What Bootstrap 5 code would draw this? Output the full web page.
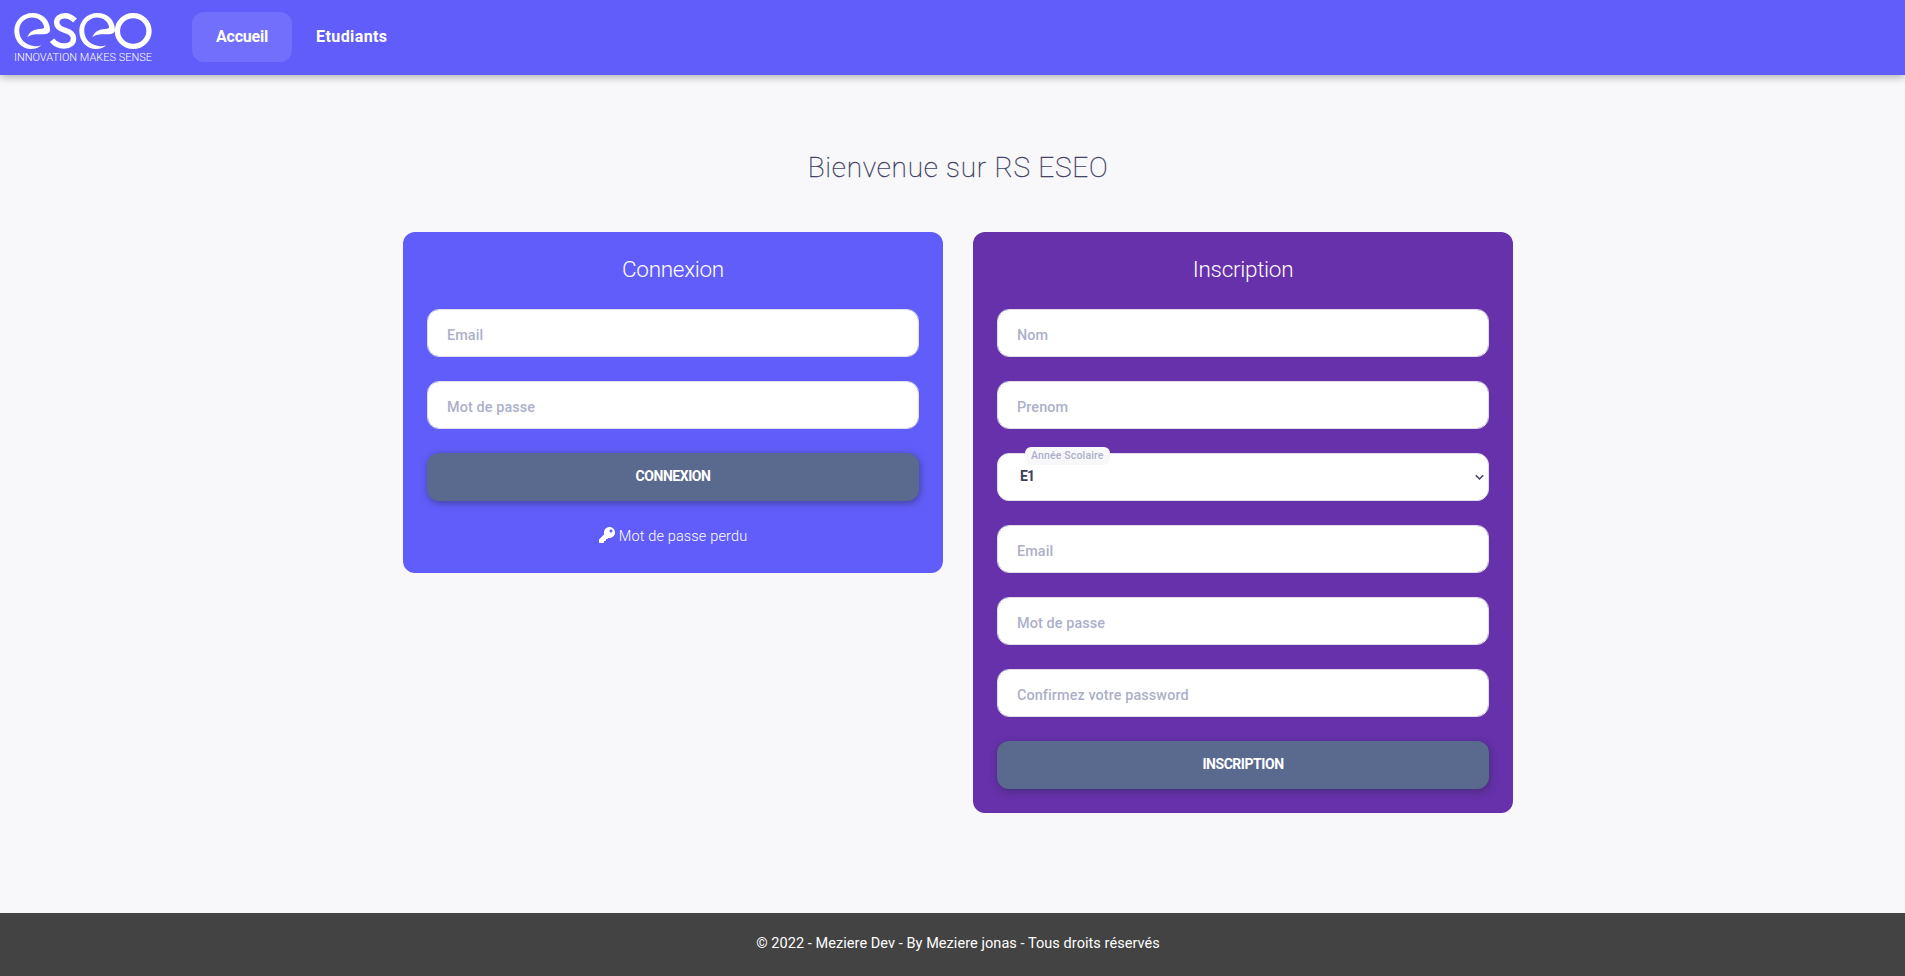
<!DOCTYPE html>
<html lang="fr">
<head>
<meta charset="utf-8">
<meta name="viewport" content="width=device-width, initial-scale=1">
<title>RS ESEO</title>
<link rel="stylesheet" href="https://cdn.jsdelivr.net/npm/bootstrap@5.3.0/dist/css/bootstrap.min.css">
<style>
body{font-family:Roboto,"Liberation Sans",sans-serif;background:#f8f8fb;color:#3e3f5e;font-size:14px}
.topbar{height:75px;background:#615dfa;box-shadow:0 2px 8px rgba(0,0,0,.3);padding:0 0 1px 14px}
.topbar .nav-link{height:50px;padding:0 24px;line-height:50px;border-radius:12px;color:#fff;font-size:16px;font-weight:700}
.topbar .nav-link.active{background:#716ffb}
.logo{width:140px;height:50px;margin-right:38px;overflow:visible}
.shifted{padding-left:11px}
.welcome{font-size:28px;font-weight:100;line-height:36px;letter-spacing:.75px;margin:75px 0 46px;-webkit-text-stroke:.35px #3e3f5e}
.forms{width:1110px;gap:30px}
.panel{width:540px;border-radius:12px;padding:24px;color:#fff}
.panel-login{background:#615dfa}
.panel-signup{background:#6631aa}
.panel h2{font-size:22.5px;font-weight:300;line-height:26px;margin:0 0 27px;letter-spacing:-.3px}
.panel form{display:flex;flex-direction:column;gap:24px}
.panel .form-control,.panel .form-select{height:48px;border:1px solid #dedeea;border-radius:12px;background-color:#fff;font-size:14.4px;padding:5px 19px 0;color:#3e3f5e;letter-spacing:.1px}
.panel .form-control::placeholder{color:#adafca;opacity:1;font-weight:500}
.panel .form-select{font-size:14px;font-weight:700;padding:0 22px 2px;letter-spacing:-1px;background-image:none}
.year-label{position:absolute;left:28px;top:-6px;height:18px;padding:0 6px;border-radius:6px;background:#f8f8fb;color:#adafca;font-size:10.5px;font-weight:500;line-height:17px;letter-spacing:.15px}
.chevron{position:absolute;right:5px;top:21px;width:9px;height:7px}
.btn-send{height:48px;border-radius:12px;border:0;background:#5a698e;color:#fff;font-size:14px;font-weight:700;line-height:44px;padding:0 0 2px;letter-spacing:-.45px;box-shadow:1px 2px 7px rgba(40,40,70,.5)}
.btn-send:hover{background:#5a698e;color:#fff}
.lost{font-size:14.5px;font-weight:300;line-height:24px;color:#fff;letter-spacing:.15px}
.foot{height:63px;background:#434343;color:#fff;font-size:14.5px;letter-spacing:.06px;padding-bottom:1px}
</style>
</head>
<body class="d-flex flex-column min-vh-100">
<header class="topbar d-flex align-items-center flex-shrink-0">
  <svg class="logo" viewBox="14 12 140 50" fill="#fff" role="img" aria-label="eseo">
    <defs>
      <path id="swoosh" d="M50 30C50 20 42.500 13 32.500 13 22 13 14.300 21 14.300 31 14.300 41.500 22 49 31 49c4.500 0 8-1.300 10.300-3.700-2.800 1-5.300 1.200-7.800.7C25 44.500 19.200 39 19.200 30.500c0-7.500 5.800-13 12.800-13 6.500 0 11 4 12 9 .3 1.500-.5 2-2 2.200-8 .6-12.500 2.300-14.700 8.600 3.700-2.800 7.200-3 11.700-3 7 0 11-.3 11-4.300Z"/>
    </defs>
    <use href="#swoosh"/>
    <path d="M75 20.500C72 17.500 68.500 15.700 65 15.700 60 15.700 56.700 18.500 56.700 22.500 56.700 27.500 60.500 29 65 30.300 70 31.800 73.500 34 73.500 38.500 73.500 43 70 46 64 46 59 46 55 44 52 40.300" fill="none" stroke="#fff" stroke-width="5.500"/>
    <use href="#swoosh" x="65"/>
    <ellipse cx="133.200" cy="31" rx="15.800" ry="15.300" fill="none" stroke="#fff" stroke-width="5.300"/>
    <text x="14" y="60.800" font-family="Roboto" font-weight="300" font-size="10.500" textLength="138" lengthAdjust="spacingAndGlyphs">INNOVATION MAKES SENSE</text>
  </svg>
  <nav class="nav">
    <a class="nav-link active" href="#" style="letter-spacing:-.2px">Accueil</a>
    <a class="nav-link" href="#" style="letter-spacing:.4px">Etudiants</a>
  </nav>
</header>
<main class="shifted flex-grow-1 d-flex flex-column align-items-center">
  <h1 class="welcome">Bienvenue sur RS ESEO</h1>
  <div class="forms d-flex align-items-start">
    <section class="panel panel-login">
      <h2 class="text-center">Connexion</h2>
      <form>
        <input class="form-control" type="email" placeholder="Email">
        <input class="form-control" type="password" placeholder="Mot de passe">
        <button class="btn btn-send w-100" type="button">CONNEXION</button>
        <a class="lost d-flex justify-content-center align-items-center text-decoration-none" href="#">
          <svg class="me-1 mb-1" width="16" height="16" viewBox="0 0 512 512" fill="#fff"><path d="M512 176c0 97-79 176-176 176-11 0-22-1-33-3l-24 27c-5 5-11 8-18 8h-37v40c0 13-11 24-24 24h-40v40c0 13-11 24-24 24H24c-13 0-24-11-24-24v-78c0-6 3-12 7-17l162-162c-6-17-9-36-9-55C160 79 239 0 336 0c97 0 176 79 176 176zM336 128c0 27 21 48 48 48s48-21 48-48-21-48-48-48-48 21-48 48z"/></svg>
          <span>Mot de passe perdu</span>
        </a>
      </form>
    </section>
    <section class="panel panel-signup">
      <h2 class="text-center">Inscription</h2>
      <form>
        <input class="form-control" type="text" placeholder="Nom">
        <input class="form-control" type="text" placeholder="Prenom">
        <div class="position-relative">
          <select class="form-select" aria-label="Année Scolaire"><option>E1</option></select>
          <span class="year-label">Année Scolaire</span>
          <svg class="chevron" viewBox="0 0 9 7" fill="none" stroke="#3e3f5e" stroke-width="1.500"><path d="M.8 1.200 4.500 5 8.200 1.200"/></svg>
        </div>
        <input class="form-control" type="email" placeholder="Email">
        <input class="form-control" type="password" placeholder="Mot de passe">
        <input class="form-control" type="password" placeholder="Confirmez votre password">
        <button class="btn btn-send w-100" type="button">INSCRIPTION</button>
      </form>
    </section>
  </div>
</main>
<footer class="foot shifted d-flex align-items-center justify-content-center flex-shrink-0">© 2022 - Meziere Dev - By Meziere jonas - Tous droits réservés</footer>
<script src="https://cdn.jsdelivr.net/npm/bootstrap@5.3.0/dist/js/bootstrap.bundle.min.js"></script>
</body>
</html>
